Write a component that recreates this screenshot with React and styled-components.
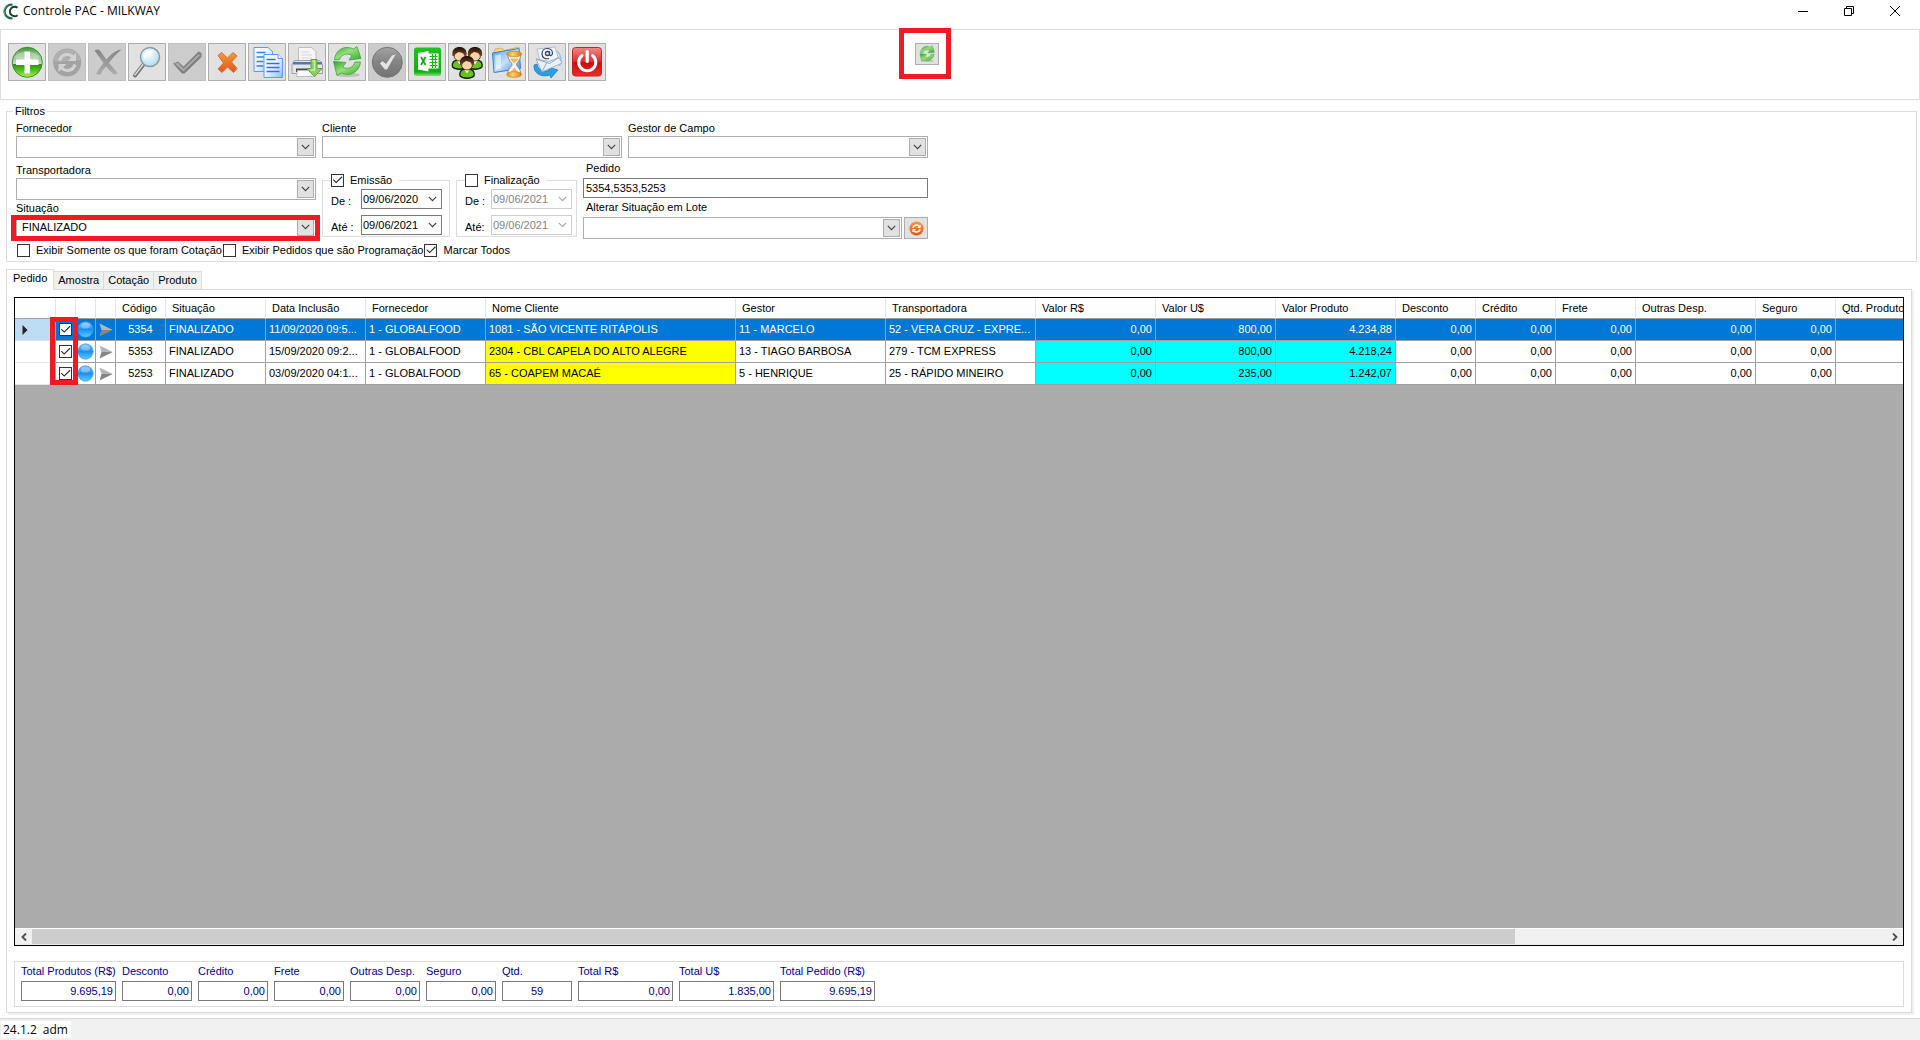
import React from 'react';
import styled, { createGlobalStyle, css } from 'styled-components';

const GlobalStyle = createGlobalStyle`
  * { box-sizing: border-box; }
  body {
    margin: 0;
    background: #fff;
    color: #000;
    font: 11px/15px "Liberation Sans", Arial, sans-serif;
  }
  button, input, select { font: inherit; color: inherit; margin: 0; }
`;

const line = '#dcdcdc';

/* ---------- window frame ---------- */

const Window = styled.div`
  display: flex;
  flex-direction: column;
  min-height: 100vh;
  overflow: hidden;
`;

const TitleBar = styled.header`
  display: flex;
  align-items: flex-start;
  justify-content: space-between;
  height: 29px;
  padding: 2px 2px 0;
`;

const Title = styled.h1`
  display: flex;
  align-items: center;
  gap: 4px;
  margin: 0;
  font: 12px/18px "Open Sans", "Noto Sans", sans-serif;
`;

const WindowButtons = styled.div`
  display: flex;
`;

const WindowButton = styled.button`
  display: grid;
  place-items: center;
  width: 46px;
  height: 17px;
  padding: 0;
  border: 0;
  background: none;
`;

/* ---------- toolbar ---------- */

const Toolbar = styled.div`
  display: flex;
  align-items: flex-start;
  gap: 2px;
  padding: 13px 7px 18px;
  border: 1px solid ${line};
`;

const ToolButton = styled.button`
  display: grid;
  place-items: center;
  flex: none;
  width: 38px;
  height: 38px;
  padding: 0;
  border: 1px solid ${(p) => (p.disabled ? '#bfbfbf' : '#adadad')};
  background: ${(p) => (p.disabled ? '#ccc' : '#e1e1e1')};
`;

const SmallButton = styled(ToolButton)`
  width: 24px;
  height: 22px;
`;

const RefreshSlot = styled.div`
  position: relative;
  margin-left: 307px;
`;

const Highlight = styled.span`
  position: absolute;
  border: 5px solid #ed1c24;
  pointer-events: none;
`;

const RefreshHighlight = styled(Highlight)`
  inset: -15px -12px -14px -16px;
`;

/* ---------- filters ---------- */

const Filters = styled.fieldset`
  min-width: 0;
  margin: 4px 3px 0 6px;
  padding: 3px 9px 4px;
  border: 1px solid ${line};
`;

const Legend = styled.legend`
  padding: 0 2px;
  margin-left: -3px;
  line-height: 14px;
`;

const FieldRow = styled.div`
  display: flex;
  align-items: flex-start;
  gap: ${(p) => p.$gap || 6}px;
`;

const FieldColumn = styled.div`
  display: flex;
  flex-direction: column;
  gap: ${(p) => p.$gap || 0}px;
  width: ${(p) => p.$width}px;
  padding-top: ${(p) => p.$top || 0}px;
`;

const Label = styled.label`
  display: block;
  padding-left: ${(p) => p.$indent || 0}px;
  line-height: 15px;
`;

const ComboFrame = styled.span`
  position: relative;
  display: grid;
  grid-template-columns: 1fr 17px;
  align-items: center;
  flex: 1;
  height: 22px;
  padding: 1px;
  border: 1px solid #adadad;
  background: #fff;
`;

const ComboSelect = styled.select`
  grid-area: 1 / 1 / 2 / 3;
  width: 100%;
  height: 18px;
  padding: 0 4px;
  border: 0;
  outline: 0;
  appearance: none;
  background: none;
`;

const ComboArrow = styled.span`
  grid-area: 1 / 2;
  display: grid;
  place-items: center;
  width: 17px;
  height: 18px;
  border: 1px solid #adadad;
  background: #e1e1e1;
  pointer-events: none;
`;

const SituationHighlight = styled(Highlight)`
  inset: -2px -5px -4px -6px;
`;

const DateGroup = styled.fieldset`
  display: flex;
  flex-direction: column;
  min-width: 0;
  width: ${(p) => p.$width}px;
  margin: 15px 0 0;
  padding: 2px ${(p) => p.$padRight}px 1px 8px;
  border: 1px solid ${line};
`;

const DateLegend = styled.legend`
  padding: 0 7px 0 0;
`;

const DateLine = styled.div`
  display: flex;
  justify-content: space-between;
  align-items: flex-end;
  margin-bottom: ${(p) => (p.$last ? 0 : 6)}px;
`;

const DateFrame = styled.span`
  display: grid;
  grid-template-columns: 1fr 17px;
  align-items: center;
  width: 81px;
  height: 20px;
  border: 1px solid ${(p) => (p.$disabled ? '#ccc' : '#7a7a7a')};
  color: ${(p) => (p.$disabled ? '#838383' : '#000')};
`;

const DateInput = styled.input`
  grid-area: 1 / 1 / 2 / 3;
  width: 100%;
  height: 18px;
  padding: 0 1px;
  border: 0;
  outline: 0;
  background: none;
`;

const DateArrow = styled.span`
  grid-area: 1 / 2;
  display: grid;
  place-items: center;
`;

const TextInput = styled.input`
  width: 100%;
  height: 20px;
  padding: 0 2px;
  border: 1px solid #7a7a7a;
  outline: 0;
  background: #fff;
  text-align: ${(p) => p.$align || 'left'};
`;

const CheckLabel = styled.label`
  display: flex;
  align-items: center;
  gap: 6px;
  line-height: 14px;
`;

const CheckRow = styled.div`
  display: flex;
  gap: 1px;
  padding: 4px 1px 0;
`;

const CheckBox = styled.input.attrs({ type: 'checkbox' })`
  display: grid;
  flex: none;
  width: 13px;
  height: 13px;
  border: 1px solid #333;
  appearance: none;
  background: #fff;
  &:checked::before {
    content: '';
    width: 11px;
    height: 11px;
    background: #222;
    clip-path: polygon(8% 50%, 14% 43%, 38% 67%, 88% 17%, 94% 24%, 38% 80%);
  }
`;

/* ---------- tabs and grid ---------- */

const Tabs = styled.nav`
  display: flex;
  align-items: flex-end;
  margin: 7px 0 -1px 6px;
`;

const Tab = styled.button`
  position: relative;
  height: 19px;
  padding: 0 4px;
  border: 1px solid ${line};
  border-left-width: 0;
  background: #f0f0f0;
  line-height: 17px;
  ${(p) =>
    p.$active &&
    css`
      height: 21px;
      padding: 0 6px 2px;
      border-left-width: 1px;
      border-bottom-color: #fff;
      background: #fff;
    `}
`;

const Panel = styled.main`
  display: flex;
  flex: 1;
  flex-direction: column;
  gap: 15px;
  min-width: 0;
  margin: 0 8px 5px 6px;
  padding: 7px 7px 5px;
  border: 1px solid ${line};
  box-shadow: 2px 2px 0 #f0f0f0;
`;

const Grid = styled.section`
  position: relative;
  display: flex;
  flex: 1;
  flex-direction: column;
  justify-content: space-between;
  min-width: 0;
  border: 1px solid #000;
  background: #ababab;
  overflow: hidden;
`;

const Table = styled.table`
  width: 100%;
  table-layout: fixed;
  border-collapse: separate;
  border-spacing: 0;
`;

const HeadCell = styled.th`
  height: 21px;
  padding: 0 0 0 6px;
  border-right: 1px solid #e5e5e5;
  border-bottom: 1px solid #a0a0a0;
  background: #fff;
  font-weight: normal;
  line-height: 15px;
  text-align: left;
  white-space: nowrap;
`;

const cellColours = {
  yellow: '#ff0',
  cyan: '#0ff',
  plain: '#fff',
};

const Cell = styled.td`
  height: 22px;
  padding: 0 3px;
  border-right: 1px solid #a0a0a0;
  border-bottom: 1px solid #a0a0a0;
  background: ${(p) => (p.$selected ? '#0078d7' : cellColours[p.$tone || 'plain'])};
  color: ${(p) => (p.$selected ? '#fff' : '#000')};
  line-height: 15px;
  text-align: ${(p) => p.$align || 'left'};
  white-space: nowrap;
  overflow: hidden;
  text-overflow: ellipsis;
`;

const IconCell = styled(Cell)`
  padding: 0 1px;
  text-overflow: clip;
  svg { display: block; margin: 0 auto; }
  input { margin: 0 2px; }
`;

const RowHeader = styled(Cell).attrs({ as: 'th' })`
  background: ${(p) => (p.$selected ? '#bcdcf4' : '#fff')};
  border-bottom-color: #e5e5e5;
  svg { display: block; margin-left: 4px; }
`;

const MarksHighlight = styled(Highlight)`
  top: 19px;
  left: 35px;
  width: 28px;
  height: 68px;
`;

const ScrollBar = styled.div`
  display: flex;
  align-items: stretch;
  height: 17px;
  border-top: 1px solid #fff;
  border-bottom: 1px solid #f0f0f0;
  background: #f0f0f0;
`;

const ScrollButton = styled.button`
  display: grid;
  place-items: center;
  width: 17px;
  padding: 0;
  border: 0;
  background: none;
`;

const ScrollTrack = styled.div`
  flex: 1;
`;

const ScrollThumb = styled.div`
  width: 80%;
  height: 100%;
  background: #cdcdcd;
`;

/* ---------- totals and status ---------- */

const Totals = styled.section`
  display: flex;
  gap: 6px;
  padding: 2px 6px 5px;
  border: 1px solid ${line};
  color: #00008b;
`;

const Total = styled.label`
  display: flex;
  flex-direction: column;
  gap: 2px;
  width: ${(p) => p.$width}px;
  white-space: nowrap;
`;

const StatusBar = styled.footer`
  display: flex;
  align-items: flex-start;
  height: 22px;
  padding: 2px 1px;
  border-top: 1px solid #d7d7d7;
  background: #f0f0f0;
  font: 12px/17px "Open Sans", "Noto Sans", sans-serif;
`;

const StatusText = styled.span`
  display: flex;
  gap: 6px;
  padding: 0 3px 0 2px;
  background: #fff;
`;

/* ---------- icons ---------- */

const Icon = ({ size = 34, children }) => (
  <svg width={size} height={size} viewBox="0 0 34 34" fill="none" aria-hidden="true">
    {children}
  </svg>
);

const Chevron = ({ color = '#444' }) => (
  <svg width="9" height="6" viewBox="0 0 9 6" fill="none" aria-hidden="true">
    <path d="M.8 .9 4.5 4.6 8.2 .9" stroke={color} strokeWidth="1.2" />
  </svg>
);

const GradientDefs = styled.svg`
  position: absolute;
`;

const Gradients = () => (
  <GradientDefs width="0" height="0" aria-hidden="true">
    <defs>
      <linearGradient id="addFill" x1="0" y1="0" x2="0" y2="1">
        <stop offset="0" stopColor="#3f9a2f" />
        <stop offset=".2" stopColor="#7fb877" />
        <stop offset=".54" stopColor="#c0dcb8" />
        <stop offset=".56" stopColor="#2d8c10" />
        <stop offset=".78" stopColor="#58c41c" />
        <stop offset="1" stopColor="#b6f24a" />
      </linearGradient>
      <linearGradient id="greyFill" x1="0" y1="0" x2="0" y2="1">
        <stop offset="0" stopColor="#858585" />
        <stop offset="1" stopColor="#aeaeae" />
      </linearGradient>
      <linearGradient id="discFill" x1="0" y1="0" x2="0" y2="1">
        <stop offset="0" stopColor="#a2a2a2" />
        <stop offset=".5" stopColor="#848484" />
        <stop offset="1" stopColor="#747474" />
      </linearGradient>
      <linearGradient id="docFill" x1="0" y1="0" x2="1" y2="1">
        <stop offset="0" stopColor="#fff" />
        <stop offset=".5" stopColor="#e8f1ff" />
        <stop offset="1" stopColor="#8db8ff" />
      </linearGradient>
      <linearGradient id="leafFill" x1="0" y1="0" x2="1" y2="1">
        <stop offset="0" stopColor="#28a428" />
        <stop offset=".45" stopColor="#98de80" />
        <stop offset="1" stopColor="#2fae28" />
      </linearGradient>
      <linearGradient id="orangeFill" x1="0" y1="0" x2="0" y2="1">
        <stop offset="0" stopColor="#f39a3c" />
        <stop offset="1" stopColor="#e0561c" />
      </linearGradient>
      <linearGradient id="redFill" x1="0" y1="0" x2="0" y2="1">
        <stop offset="0" stopColor="#f08a86" />
        <stop offset=".5" stopColor="#d92c2c" />
        <stop offset=".52" stopColor="#c40d10" />
        <stop offset="1" stopColor="#ef2b2b" />
      </linearGradient>
      <linearGradient id="excelFill" x1="0" y1="0" x2="0" y2="1">
        <stop offset="0" stopColor="#1fc41f" />
        <stop offset=".85" stopColor="#0fae12" />
        <stop offset="1" stopColor="#7be07b" />
      </linearGradient>
      <linearGradient id="folderFill" x1="0" y1="0" x2="1" y2="1">
        <stop offset="0" stopColor="#4c9cf5" />
        <stop offset=".5" stopColor="#c4e2ff" />
        <stop offset="1" stopColor="#3d86ea" />
      </linearGradient>
      <linearGradient id="goldFill" x1="0" y1="0" x2="1" y2="0">
        <stop offset="0" stopColor="#e48a10" />
        <stop offset=".4" stopColor="#ffd070" />
        <stop offset="1" stopColor="#df7f08" />
      </linearGradient>
      <radialGradient id="lensFill" cx=".4" cy=".35" r=".7">
        <stop offset="0" stopColor="#fff" />
        <stop offset="1" stopColor="#a9dcf2" />
      </radialGradient>
      <linearGradient id="ballFill" x1="0" y1="0" x2="0" y2="1">
        <stop offset="0" stopColor="#7cc2fc" />
        <stop offset=".35" stopColor="#3d9ff5" />
        <stop offset=".5" stopColor="#1c8ef3" />
        <stop offset="1" stopColor="#5ad0ff" />
      </linearGradient>
      <linearGradient id="hairFill" x1="0" y1="0" x2="0" y2="1">
        <stop offset="0" stopColor="#1e0f06" />
        <stop offset="1" stopColor="#7a4520" />
      </linearGradient>
    </defs>
  </GradientDefs>
);

const AppLogo = () => (
  <svg width="17" height="17" viewBox="0 0 17 17" fill="none" aria-hidden="true">
    <path d="M10.5 1.8A6.8 6.8 0 1 0 10.5 15.2" stroke="#1f6b4a" strokeWidth="2.2" />
    <path d="M15.5 4.8A4.7 4.7 0 1 0 15.5 12.2" stroke="#14402e" strokeWidth="2" />
    <path d="M4 3.5A7 7 0 0 0 3 12" stroke="#6bb08f" strokeWidth="1" />
  </svg>
);

const MinimizeIcon = () => (
  <svg width="10" height="10" viewBox="0 0 10 10" aria-hidden="true">
    <path d="M0 5h10v1H0z" fill="#000" />
  </svg>
);

const RestoreIcon = () => (
  <svg width="10" height="10" viewBox="0 0 10 10" fill="none" stroke="#000" aria-hidden="true">
    <path d="M.5 2.5h7v7h-7zM2.5 2.5v-2h7v7h-2" />
  </svg>
);

const CloseIcon = () => (
  <svg width="10" height="10" viewBox="0 0 10 10" fill="none" stroke="#000" aria-hidden="true">
    <path d="M0 0 10 10M10 0 0 10" />
  </svg>
);

const AddIcon = () => (
  <Icon>
    <circle cx="17.3" cy="17.3" r="15" fill="url(#addFill)" stroke="#3f8f35" strokeWidth="1" />
    <path d="M5 12C8 5 26 5 29.5 12 26 17 9 17 5 12Z" fill="#fff" opacity=".3" />
    <path d="M14.5 6.5h5.5v8h8.5v5.5h-8.5v8.5h-5.5v-8.5H6v-5.5h8.5Z" fill="#fff" />
  </Icon>
);

const SyncDisabledIcon = () => (
  <Icon>
    <circle cx="17.2" cy="17.5" r="14" fill="#a3a3a3" />
    <path d="M4 16C5 0 29.5 0 30.5 16 22 12 13 19 4 16Z" fill="#b0b0b0" />
    <path d="M9.5 15.5A8 8 0 0 1 23 12" stroke="#d2d2d2" strokeWidth="3.2" />
    <path d="M26 8v8h-8Z" fill="#d2d2d2" />
    <path d="M25 19.5A8 8 0 0 1 11.5 23" stroke="#d2d2d2" strokeWidth="3.2" />
    <path d="M8.5 27v-8h8Z" fill="#d2d2d2" />
  </Icon>
);

const CrossDisabledIcon = () => (
  <Icon>
    <path d="M4.5 5.5C8 3.5 10 5 12 8.5L16.5 14.5C21 9 26 5 31.5 4.5 27 8 22.5 13 19 18L28 28.5 23.5 29.5 16 21.5C13 24.5 11.5 27 10.5 30L6 29C8 25 10.5 21.5 13.5 18Z" fill="url(#greyFill)" />
  </Icon>
);

const SearchIcon = () => (
  <Icon>
    <path d="M13.5 19.5 5 30.5" stroke="#777" strokeWidth="4" strokeLinecap="round" />
    <path d="M13 19.5 5 29.8" stroke="#ddd" strokeWidth="1.5" strokeLinecap="round" strokeDasharray="2 1" />
    <circle cx="20" cy="12" r="9.5" fill="url(#lensFill)" stroke="#8b99a3" strokeWidth="1.5" />
    <path d="M14 10C15 5 21 4 25 7 21 8 17 10 14 15Z" fill="#fff" opacity=".8" />
  </Icon>
);

const CheckDisabledIcon = () => (
  <Icon>
    <path d="M3 18.5 8 16.5 13.5 21.5 28.5 6.5 31.5 8V12L14.5 28.5H12Z" fill="#7f7f7f" />
    <path d="M4.5 18.5 8 17.8 13.5 23.5 28.5 9 30 10.5 13.5 26.5Z" fill="#a9a9a9" />
  </Icon>
);

const CancelIcon = () => (
  <Icon>
    <path d="m8 10.5 3.5-3 6 5.5 5.5-5.5 4 3.5-5.5 6 5.5 6.5-3.5 4-6-5.5-5.5 5.5-4-3.5 5.5-6Z" fill="url(#orangeFill)" stroke="#db6f2a" strokeLinejoin="round" />
  </Icon>
);

const CopyIcon = () => (
  <Icon>
    <path d="M4 2.5h14l4.5 4v20H4z" fill="url(#docFill)" stroke="#5f9af2" />
    <path d="M6.5 7.5h9M6.5 12h8M6.5 16.5h7M6.5 21h7" stroke="#3b7fe0" strokeWidth="1.3" />
    <path d="M14 9.5h14l4.5 4v19H14z" fill="url(#docFill)" stroke="#5f9af2" />
    <path d="M28 9.5v4h4.5" fill="#fff" stroke="#5f9af2" />
    <path d="M16.5 14.5h9M16.5 18.5h13M16.5 22.5h13M16.5 26.5h13" stroke="#3b6fd0" strokeWidth="1.3" />
  </Icon>
);

const PrintIcon = () => (
  <Icon>
    <path d="M8.5 2.5h13l4.5 4v12h-17.5z" fill="#f6f6f6" stroke="#bdbdbd" />
    <path d="M11 7h8M11 10h11M11 13h11" stroke="#d5d5d5" />
    <path d="M4.5 15.5h25l3 4v9H2v-9Z" fill="#e6e6e8" stroke="#a0a0a4" />
    <path d="M3 17h29v2.5H3z" fill="#4f79b0" />
    <path d="M6 23.5h22v3.5H6z" fill="#4b4b4f" />
    <path d="M7.5 25.5h17l1 6h-19z" fill="#fafafa" stroke="#bcbcbc" />
    <path d="M21 14.5h6v9h5l-7.5 8-8-8H21Z" fill="#8ecf62" stroke="#5ba53a" />
    <path d="M22.5 16h2v9h-4" stroke="#c4ecaa" strokeWidth="1.4" />
  </Icon>
);

const RefreshIcon = ({ size }) => (
  <Icon size={size}>
    <ellipse cx="18" cy="30" rx="12" ry="2" fill="#b9c4b6" />
    <path d="M4.5 15C5.5 5 14-.5 23.5 4L27 1.5 31 13.5 19 15 22 10.5C17 7.5 11 9.5 9.5 14.5Z" fill="url(#leafFill)" stroke="#3ba633" strokeWidth=".8" />
    <path d="M30.5 17C29.5 27 20 32 11.5 28L7 30.5 3.5 16.5 16 17.5 12.5 22C18 25 23.5 22.5 25 17Z" fill="url(#leafFill)" stroke="#3ba633" strokeWidth=".8" />
  </Icon>
);

const DoneIcon = () => (
  <Icon>
    <circle cx="17.3" cy="17.3" r="15" fill="url(#discFill)" stroke="#777" />
    <path d="M10 18.5 12.5 16 16 19 22 10.5 25.5 9.5 17 24.5H15Z" fill="#e4e4e4" />
  </Icon>
);

const ExcelIcon = () => (
  <Icon>
    <rect x="4" y="2.5" width="27" height="28.5" rx="2.5" fill="url(#excelFill)" />
    <path d="M18 8.5h10.5v15H18z" fill="#fff" />
    <path d="M19.5 11.5h8M19.5 14.5h8M19.5 17.5h8M19.5 20.5h8M22.5 9v14M25.5 9v14" stroke="#1cb51c" strokeWidth="1" />
    <path d="M8 8 18.5 6v20.5L8 24.5Z" fill="#fff" />
    <path d="m11 12 4.5 8M15.5 12 11 20" stroke="#12a515" strokeWidth="1.7" />
  </Icon>
);

const Person = ({ x, y }) => (
  <g transform={`translate(${x} ${y})`}>
    <path d="M-7 14C-8 8-4 7 0 7s8 1 7 7C4 17-4 17-7 14Z" fill="#63c51b" stroke="#161b08" strokeWidth="1.3" />
    <path d="M-2.5 7.5 0 11.5 2.5 7.5Z" fill="#fff" />
    <ellipse cx="0" cy="2.5" rx="5.5" ry="5.5" fill="#f9d3a7" stroke="#3c2413" strokeWidth=".8" />
    <path d="M-7 3C-8-4-4-6 0-6s8 2 7 9L4.5 2.5C4.5 0 2-.5-1-1L-4 1-5 3Z" fill="url(#hairFill)" />
  </g>
);

const PeopleIcon = () => (
  <Icon>
    <Person x={9.5} y={8} />
    <Person x={25} y={8} />
    <Person x={17} y={17} />
  </Icon>
);

const FolderClockIcon = () => (
  <Icon>
    <path d="M4 6.5 5 4l7-1 2 2.5 15-3.5v20L7 27 4 24Z" fill="#ffd969" stroke="#c9a74a" strokeWidth=".7" />
    <path d="M2.5 8 29 3.5l1.5 20L4 27.5Z" fill="url(#folderFill)" stroke="#3a7dd8" />
    <path d="M5 10.5 11 9.5v14L6 24.5Z" fill="#fff" opacity=".55" />
    <path d="M18 9.5h12.5C31 16 26.5 17 26.5 19.5S31 23 30.5 29H18c-.5-6 4-7 4-9.5S17.5 16 18 9.5Z" fill="#eef5f8" stroke="#a38a5c" />
    <path d="M19.5 13.5H29L24.3 18.5ZM19.5 28.5 24.3 22.5 29 28.5Z" fill="#eeb866" />
    <ellipse cx="24.2" cy="9" rx="7.5" ry="2.8" fill="url(#goldFill)" stroke="#c97c10" strokeWidth=".7" />
    <ellipse cx="24.2" cy="29.5" rx="7.5" ry="2.8" fill="url(#goldFill)" stroke="#c97c10" strokeWidth=".7" />
  </Icon>
);

const MailIcon = () => (
  <Icon>
    <path d="M4 20C3 28 11 33 20 30L21 33 28 25 18 22 19 25.5C13 27 8 25 7 19Z" fill="#2b9fe0" stroke="#1b77b8" strokeWidth=".7" />
    <path d="M27 6C31 9 32 15 29.5 21" stroke="#8cc6ea" strokeWidth="1.5" />
    <path d="M7 4 25 2 28.5 14 11 21Z" fill="#f1f4f8" stroke="#a7b4c2" strokeWidth=".8" />
    <circle cx="17.5" cy="8.5" r="2" stroke="#33456b" strokeWidth="1.3" />
    <path d="M19.5 6v3.5c.5 2 3 1 3-1.5 0-3.5-3-4.5-5.5-4.5S12 5.5 12 9s3 5.5 7 4.5" stroke="#33456b" strokeWidth="1.2" />
    <path d="M6 14 19 16.5 29 12.5 32 18 12 27Z" fill="#eaf1f8" stroke="#8fa4ba" strokeWidth=".8" />
    <path d="M6 14 19.5 18.5 29 12.5M12 27 16.5 18" stroke="#8fa4ba" strokeWidth=".9" />
  </Icon>
);

const PowerIcon = () => (
  <Icon>
    <rect x="2.5" y="2.5" width="29" height="28.5" rx="3" fill="url(#redFill)" stroke="#c22" />
    <path d="M12 10.5a8.5 8.5 0 1 0 10.5 0" stroke="#fff" strokeWidth="3" strokeLinecap="round" />
    <path d="M17.2 6.5v10" stroke="#fff" strokeWidth="3.2" strokeLinecap="round" />
  </Icon>
);

const BatchIcon = () => (
  <Icon size={15}>
    <circle cx="17" cy="17" r="16" fill="url(#orangeFill)" />
    <path d="M8.5 15A9 9 0 0 1 23 11.5" stroke="#fff" strokeWidth="3.5" />
    <path d="M26.5 8v8h-8Z" fill="#fff" />
    <path d="M25.5 19A9 9 0 0 1 11 22.5" stroke="#fff" strokeWidth="3.5" />
    <path d="M7.5 26v-8h8Z" fill="#fff" />
  </Icon>
);

const Ball = () => (
  <svg width="17" height="17" viewBox="0 0 17 17" aria-hidden="true">
    <circle cx="8.5" cy="8.5" r="7.7" fill="url(#ballFill)" stroke="#3b96e6" strokeWidth=".7" />
    <ellipse cx="8.5" cy="4.8" rx="4.5" ry="2.8" fill="#fff" opacity=".3" />
  </svg>
);

const SendArrow = () => (
  <svg width="14" height="14" viewBox="0 0 14 14" aria-hidden="true">
    <path d="M.5 .5 13.8 7H2.5Z" fill="#b4b4b4" />
    <path d="M.5 13.5 13.8 7H2.5Z" fill="#858585" />
  </svg>
);

const CurrentRow = () => (
  <svg width="6" height="10" viewBox="0 0 6 10" aria-hidden="true">
    <path d="M.5 0 5.5 5 .5 10Z" fill="#222" />
  </svg>
);

const ScrollArrow = ({ d }) => (
  <svg width="8" height="8" viewBox="0 0 8 8" fill="none" aria-hidden="true">
    <path d={d} stroke="#505050" strokeWidth="1.9" />
  </svg>
);

/* ---------- data ---------- */

const tools = [
  { name: 'Novo', icon: AddIcon },
  { name: 'Atualizar registro', icon: SyncDisabledIcon, disabled: true },
  { name: 'Excluir', icon: CrossDisabledIcon, disabled: true },
  { name: 'Pesquisar', icon: SearchIcon },
  { name: 'Confirmar', icon: CheckDisabledIcon, disabled: true },
  { name: 'Cancelar', icon: CancelIcon },
  { name: 'Copiar', icon: CopyIcon },
  { name: 'Imprimir', icon: PrintIcon },
  { name: 'Atualizar', icon: RefreshIcon },
  { name: 'Finalizar', icon: DoneIcon, disabled: true },
  { name: 'Exportar Excel', icon: ExcelIcon },
  { name: 'Clientes', icon: PeopleIcon },
  { name: 'Histórico', icon: FolderClockIcon },
  { name: 'E-mail', icon: MailIcon },
  { name: 'Sair', icon: PowerIcon },
];

const columns = [
  { title: 'Código', width: 50, align: 'center' },
  { title: 'Situação', width: 100 },
  { title: 'Data Inclusão', width: 100 },
  { title: 'Fornecedor', width: 120 },
  { title: 'Nome Cliente', width: 250, tone: 'yellow' },
  { title: 'Gestor', width: 150 },
  { title: 'Transportadora', width: 150 },
  { title: 'Valor R$', width: 120, align: 'right', tone: 'cyan' },
  { title: 'Valor U$', width: 120, align: 'right', tone: 'cyan' },
  { title: 'Valor Produto', width: 120, align: 'right', tone: 'cyan' },
  { title: 'Desconto', width: 80, align: 'right' },
  { title: 'Crédito', width: 80, align: 'right' },
  { title: 'Frete', width: 80, align: 'right' },
  { title: 'Outras Desp.', width: 120, align: 'right' },
  { title: 'Seguro', width: 80, align: 'right' },
  { title: 'Qtd. Produto', width: 100, align: 'right' },
];

const rows = [
  ['5354', 'FINALIZADO', '11/09/2020 09:5...', '1 - GLOBALFOOD', '1081 - SÃO VICENTE RITÁPOLIS', '11 - MARCELO', '52 - VERA CRUZ - EXPRE...', '0,00', '800,00', '4.234,88', '0,00', '0,00', '0,00', '0,00', '0,00', ''],
  ['5353', 'FINALIZADO', '15/09/2020 09:2...', '1 - GLOBALFOOD', '2304 - CBL CAPELA DO ALTO ALEGRE', '13 - TIAGO BARBOSA', '279 - TCM EXPRESS', '0,00', '800,00', '4.218,24', '0,00', '0,00', '0,00', '0,00', '0,00', ''],
  ['5253', 'FINALIZADO', '03/09/2020 04:1...', '1 - GLOBALFOOD', '65 - COAPEM MACAÉ', '5 - HENRIQUE', '25 - RÁPIDO MINEIRO', '0,00', '235,00', '1.242,07', '0,00', '0,00', '0,00', '0,00', '0,00', ''],
];

const totals = [
  { label: 'Total Produtos (R$)', value: '9.695,19', width: 95 },
  { label: 'Desconto', value: '0,00', width: 70 },
  { label: 'Crédito', value: '0,00', width: 70 },
  { label: 'Frete', value: '0,00', width: 70 },
  { label: 'Outras Desp.', value: '0,00', width: 70 },
  { label: 'Seguro', value: '0,00', width: 70 },
  { label: 'Qtd.', value: '59', width: 70, align: 'center' },
  { label: 'Total R$', value: '0,00', width: 95 },
  { label: 'Total U$', value: '1.835,00', width: 95 },
  { label: 'Total Pedido (R$)', value: '9.695,19', width: 95 },
];

/* ---------- composed controls ---------- */

const Combo = ({ id, value = '', children }) => (
  <ComboFrame>
    <ComboSelect id={id} defaultValue={value}>
      <option value={value}>{value}</option>
    </ComboSelect>
    <ComboArrow>
      <Chevron />
    </ComboArrow>
    {children}
  </ComboFrame>
);

const ComboField = ({ id, label, value, children }) => (
  <div>
    <Label htmlFor={id}>{label}</Label>
    <Combo id={id} value={value}>{children}</Combo>
  </div>
);

const DateRange = ({ id, title, width, padRight, from, to, untilLabel, checked, disabled }) => (
  <DateGroup $width={width} $padRight={padRight}>
    <DateLegend>
      <CheckLabel>
        <CheckBox defaultChecked={checked} />
        {title}
      </CheckLabel>
    </DateLegend>
    {[['De :', from], [untilLabel, to]].map(([label, value], i) => (
      <DateLine key={label} $last={i === 1}>
        <Label htmlFor={`${id}${i}`}>{label}</Label>
        <DateFrame $disabled={disabled}>
          <DateInput id={`${id}${i}`} defaultValue={value} disabled={disabled} />
          <DateArrow>
            <Chevron color={disabled ? '#aaa' : '#444'} />
          </DateArrow>
        </DateFrame>
      </DateLine>
    ))}
  </DateGroup>
);

export default function App() {
  return (
    <Window>
      <GlobalStyle />
      <Gradients />
      <TitleBar>
        <Title>
          <AppLogo />
          Controle PAC - MILKWAY
        </Title>
        <WindowButtons>
          <WindowButton aria-label="Minimizar"><MinimizeIcon /></WindowButton>
          <WindowButton aria-label="Restaurar"><RestoreIcon /></WindowButton>
          <WindowButton aria-label="Fechar"><CloseIcon /></WindowButton>
        </WindowButtons>
      </TitleBar>

      <Toolbar>
        {tools.map(({ name, icon: ToolIcon, disabled }) => (
          <ToolButton key={name} aria-label={name} disabled={disabled}>
            <ToolIcon />
          </ToolButton>
        ))}
        <RefreshSlot>
          <SmallButton aria-label="Atualizar lista">
            <RefreshIcon size={18} />
          </SmallButton>
          <RefreshHighlight />
        </RefreshSlot>
      </Toolbar>

      <Filters>
        <Legend>Filtros</Legend>
        <FieldRow>
          <FieldColumn $width={300}>
            <ComboField id="fornecedor" label="Fornecedor" />
          </FieldColumn>
          <FieldColumn $width={300}>
            <ComboField id="cliente" label="Cliente" />
          </FieldColumn>
          <FieldColumn $width={300}>
            <ComboField id="gestor" label="Gestor de Campo" />
          </FieldColumn>
        </FieldRow>
        <FieldRow>
          <FieldColumn $width={300} $gap={1} $top={5}>
            <ComboField id="transportadora" label="Transportadora" />
            <ComboField id="situacao" label="Situação" value="FINALIZADO">
              <SituationHighlight />
            </ComboField>
          </FieldColumn>
          <DateRange id="emissao" title="Emissão" width={128} padRight={7} from="09/06/2020" to="09/06/2021" untilLabel="Até :" checked />
          <DateRange id="finalizacao" title="Finalização" width={121} padRight={4} from="09/06/2021" to="09/06/2021" untilLabel="Até:" disabled />
          <FieldColumn $width={345} $gap={2} $top={3}>
            <Label htmlFor="pedido" $indent={3}>Pedido</Label>
            <TextInput id="pedido" defaultValue="5354,5353,5253" />
            <Label htmlFor="lote" $indent={3}>Alterar Situação em Lote</Label>
            <FieldRow $gap={2}>
              <Combo id="lote" />
              <SmallButton aria-label="Aplicar em lote">
                <BatchIcon />
              </SmallButton>
            </FieldRow>
          </FieldColumn>
        </FieldRow>
        <CheckRow>
          <CheckLabel><CheckBox />Exibir Somente os que foram Cotação</CheckLabel>
          <CheckLabel><CheckBox />Exibir Pedidos que são Programação</CheckLabel>
          <CheckLabel><CheckBox defaultChecked />Marcar Todos</CheckLabel>
        </CheckRow>
      </Filters>

      <Tabs>
        <Tab $active>Pedido</Tab>
        <Tab>Amostra</Tab>
        <Tab>Cotação</Tab>
        <Tab>Produto</Tab>
      </Tabs>

      <Panel>
        <Grid>
          <Table>
            <colgroup>
              <col width="41" />
              <col width="20" />
              <col width="20" />
              <col width="20" />
              {columns.map((c) => (
                <col key={c.title} width={c.width} />
              ))}
            </colgroup>
            <thead>
              <tr>
                <HeadCell />
                <HeadCell />
                <HeadCell />
                <HeadCell />
                {columns.map((c) => (
                  <HeadCell key={c.title}>{c.title}</HeadCell>
                ))}
              </tr>
            </thead>
            <tbody>
              {rows.map((row, r) => (
                <tr key={row[0]}>
                  <RowHeader $selected={r === 0}>{r === 0 && <CurrentRow />}</RowHeader>
                  <IconCell $selected={r === 0}>
                    <CheckBox defaultChecked aria-label={`Marcar ${row[0]}`} />
                  </IconCell>
                  <IconCell $selected={r === 0}><Ball /></IconCell>
                  <IconCell $selected={r === 0}><SendArrow /></IconCell>
                  {row.map((value, i) => (
                    <Cell key={columns[i].title} $selected={r === 0} $align={columns[i].align} $tone={columns[i].tone}>
                      {value}
                    </Cell>
                  ))}
                </tr>
              ))}
            </tbody>
          </Table>
          <MarksHighlight />
          <ScrollBar>
            <ScrollButton aria-label="Rolar para a esquerda"><ScrollArrow d="M6 .5 2.5 4 6 7.5" /></ScrollButton>
            <ScrollTrack><ScrollThumb /></ScrollTrack>
            <ScrollButton aria-label="Rolar para a direita"><ScrollArrow d="M2 .5 5.5 4 2 7.5" /></ScrollButton>
          </ScrollBar>
        </Grid>

        <Totals>
          {totals.map((t) => (
            <Total key={t.label} $width={t.width}>
              {t.label}
              <TextInput defaultValue={t.value} $align={t.align || 'right'} />
            </Total>
          ))}
        </Totals>
      </Panel>

      <StatusBar>
        <StatusText>
          <span>24.1.2</span>
          <span>adm</span>
        </StatusText>
      </StatusBar>
    </Window>
  );
}
